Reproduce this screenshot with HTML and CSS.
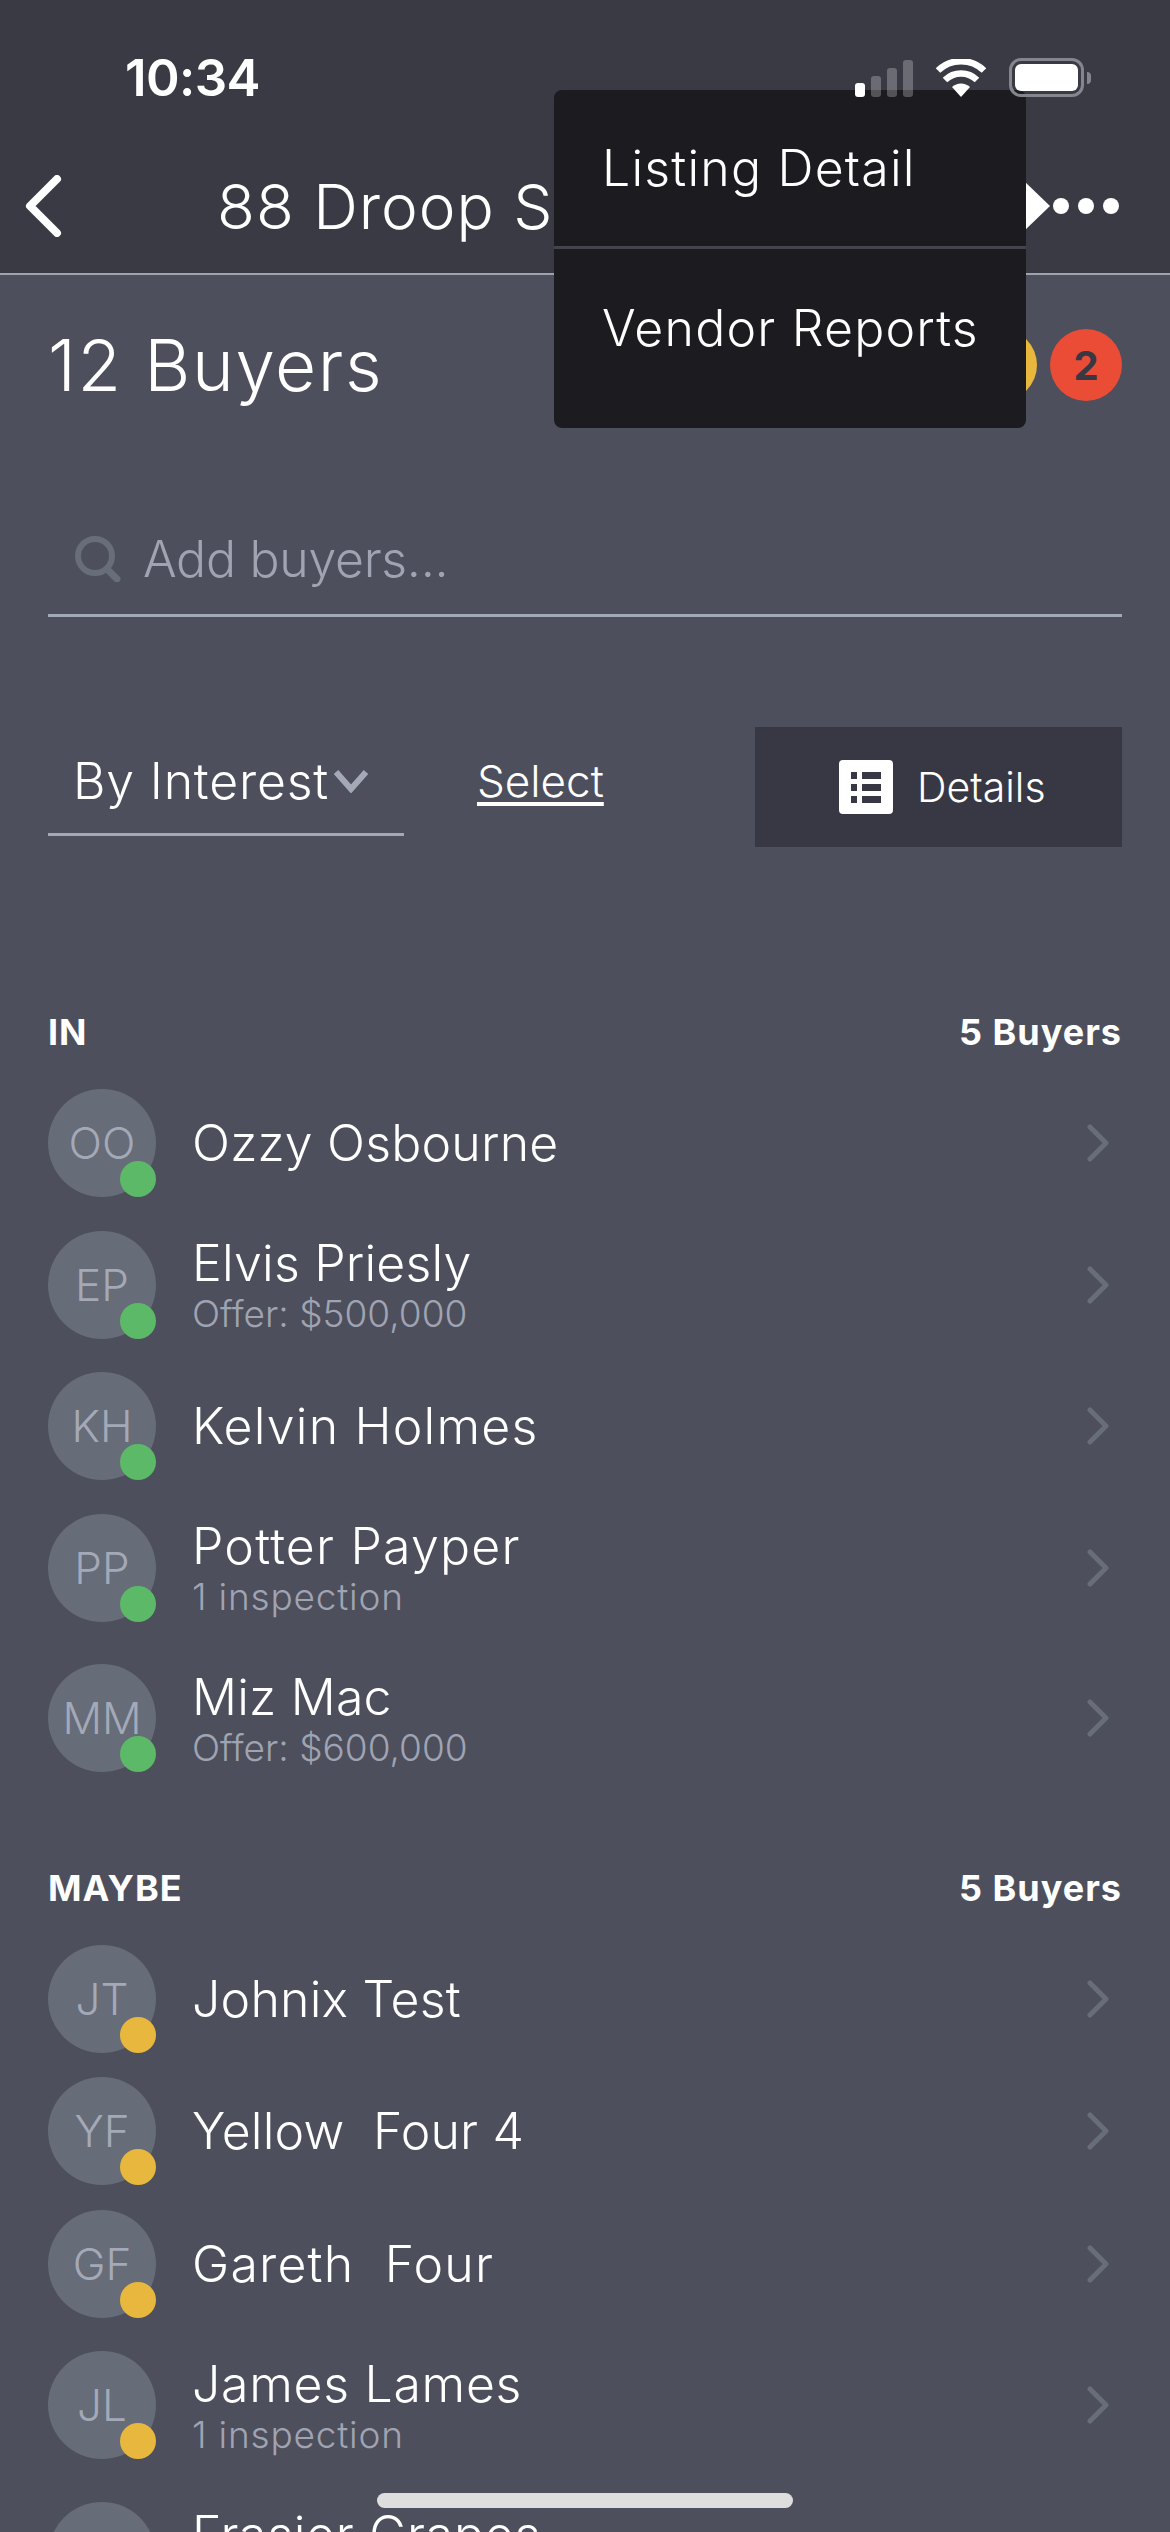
FILE: index.html
```html
<!DOCTYPE html>
<html lang="en">
<head>
    <meta charset="UTF-8">
    <meta name="viewport" content="width=device-width, initial-scale=1.0">
    <title>88 Droop St - Buyers</title>
    <link rel="stylesheet" href="styles.css">
</head>
<body>
    <div id="screen">
        <header class="top-bar">
            <div class="status-bar">
                <span class="clock">10:34</span>
                <div class="status-icons">
                    <div class="signal">
                        <i class="bar bar-1 bar-on"></i>
                        <i class="bar bar-2"></i>
                        <i class="bar bar-3"></i>
                        <i class="bar bar-4"></i>
                    </div>
                    <svg class="wifi" width="52" height="38" viewBox="0 0 52 38">
                        <path d="M26 38 L17 28 A13 13 0 0 1 35 28 Z" fill="#fff"/>
                        <path d="M10 21 A23 23 0 0 1 42 21" fill="none" stroke="#fff" stroke-width="6.5"/>
                        <path d="M3 11.5 A33 33 0 0 1 49 11.5" fill="none" stroke="#fff" stroke-width="6.5"/>
                    </svg>
                    <div class="battery">
                        <div class="battery-level"></div>
                    </div>
                    <div class="battery-nub"></div>
                </div>
            </div>
            <div class="nav-bar">
                <svg class="back" width="38" height="62" viewBox="0 0 38 62">
                    <path d="M33 4 L6 31 L33 58" fill="none" stroke="#fff" stroke-width="8" stroke-linecap="round" stroke-linejoin="round"/>
                </svg>
                <span class="nav-title">88 Droop St</span>
                <div class="more">
                    <i></i><i></i><i></i>
                </div>
            </div>
        </header>

        <main class="content">
            <div class="summary">
                <h1>12 Buyers</h1>
                <div class="badges">
                    <span class="badge badge-yellow">3</span>
                    <span class="badge badge-red">2</span>
                </div>
            </div>

            <div class="search">
                <svg width="46" height="46" viewBox="0 0 46 46">
                    <circle cx="20" cy="20" r="17" fill="none" stroke="#676d79" stroke-width="6"/>
                    <path d="M32 33 L42 43" stroke="#676d79" stroke-width="7" stroke-linecap="round"/>
                </svg>
                <span class="search-text">Add buyers...</span>
            </div>

            <div class="controls">
                <div class="sort">
                    <span>By Interest</span>
                    <svg width="36" height="24" viewBox="0 0 36 24">
                        <path d="M3 3 L18 20 L33 3" fill="none" stroke="#a4a9b8" stroke-width="6"/>
                    </svg>
                </div>
                <a class="select-link">Select</a>
                <div class="details-btn">
                    <svg width="54" height="54" viewBox="0 0 54 54">
                        <rect width="54" height="54" rx="4" fill="#fff"/>
                        <rect x="12" y="12" width="6" height="7" fill="#383844"/>
                        <rect x="23" y="12" width="19" height="7" fill="#383844"/>
                        <rect x="12" y="24" width="6" height="7" fill="#383844"/>
                        <rect x="23" y="24" width="19" height="7" fill="#383844"/>
                        <rect x="12" y="36" width="6" height="7" fill="#383844"/>
                        <rect x="23" y="36" width="19" height="7" fill="#383844"/>
                    </svg>
                    <span>Details</span>
                </div>
            </div>

            <section class="group group-in">
                <div class="group-head"><span>IN</span><span>5 Buyers</span></div>

                <div class="row">
                    <div class="avatar">OO<i class="dot dot-green"></i></div>
                    <div class="row-text"><div class="name">Ozzy Osbourne</div></div>
                    <svg class="chev" width="24" height="38" viewBox="0 0 24 38"><path d="M4 3 L20 19 L4 35" fill="none" stroke="#686d7a" stroke-width="5" stroke-linecap="round" stroke-linejoin="round"/></svg>
                </div>
                <div class="row row-sub">
                    <div class="avatar">EP<i class="dot dot-green"></i></div>
                    <div class="row-text"><div class="name">Elvis Priesly</div><div class="sub">Offer: $500,000</div></div>
                    <svg class="chev" width="24" height="38" viewBox="0 0 24 38"><path d="M4 3 L20 19 L4 35" fill="none" stroke="#686d7a" stroke-width="5" stroke-linecap="round" stroke-linejoin="round"/></svg>
                </div>
                <div class="row">
                    <div class="avatar">KH<i class="dot dot-green"></i></div>
                    <div class="row-text"><div class="name name-wide">Kelvin Holmes</div></div>
                    <svg class="chev" width="24" height="38" viewBox="0 0 24 38"><path d="M4 3 L20 19 L4 35" fill="none" stroke="#686d7a" stroke-width="5" stroke-linecap="round" stroke-linejoin="round"/></svg>
                </div>
                <div class="row row-sub">
                    <div class="avatar">PP<i class="dot dot-green"></i></div>
                    <div class="row-text"><div class="name name-wide">Potter Payper</div><div class="sub sub-wide">1 inspection</div></div>
                    <svg class="chev" width="24" height="38" viewBox="0 0 24 38"><path d="M4 3 L20 19 L4 35" fill="none" stroke="#686d7a" stroke-width="5" stroke-linecap="round" stroke-linejoin="round"/></svg>
                </div>
                <div class="row row-sub">
                    <div class="avatar">MM<i class="dot dot-green"></i></div>
                    <div class="row-text"><div class="name">Miz Mac</div><div class="sub">Offer: $600,000</div></div>
                    <svg class="chev" width="24" height="38" viewBox="0 0 24 38"><path d="M4 3 L20 19 L4 35" fill="none" stroke="#686d7a" stroke-width="5" stroke-linecap="round" stroke-linejoin="round"/></svg>
                </div>
            </section>

            <section class="group group-maybe">
                <div class="group-head"><span>MAYBE</span><span>5 Buyers</span></div>

                <div class="row">
                    <div class="avatar">JT<i class="dot dot-yellow"></i></div>
                    <div class="row-text"><div class="name">Johnix Test</div></div>
                    <svg class="chev" width="24" height="38" viewBox="0 0 24 38"><path d="M4 3 L20 19 L4 35" fill="none" stroke="#686d7a" stroke-width="5" stroke-linecap="round" stroke-linejoin="round"/></svg>
                </div>
                <div class="row">
                    <div class="avatar">YF<i class="dot dot-yellow"></i></div>
                    <div class="row-text"><div class="name">Yellow&nbsp; Four 4</div></div>
                    <svg class="chev" width="24" height="38" viewBox="0 0 24 38"><path d="M4 3 L20 19 L4 35" fill="none" stroke="#686d7a" stroke-width="5" stroke-linecap="round" stroke-linejoin="round"/></svg>
                </div>
                <div class="row">
                    <div class="avatar">GF<i class="dot dot-yellow"></i></div>
                    <div class="row-text"><div class="name name-wide">Gareth&nbsp; Four</div></div>
                    <svg class="chev" width="24" height="38" viewBox="0 0 24 38"><path d="M4 3 L20 19 L4 35" fill="none" stroke="#686d7a" stroke-width="5" stroke-linecap="round" stroke-linejoin="round"/></svg>
                </div>
                <div class="row row-sub">
                    <div class="avatar">JL<i class="dot dot-yellow"></i></div>
                    <div class="row-text"><div class="name name-mid">James Lames</div><div class="sub sub-wide">1 inspection</div></div>
                    <svg class="chev" width="24" height="38" viewBox="0 0 24 38"><path d="M4 3 L20 19 L4 35" fill="none" stroke="#686d7a" stroke-width="5" stroke-linecap="round" stroke-linejoin="round"/></svg>
                </div>
                <div class="row row-sub">
                    <div class="avatar">FG<i class="dot dot-yellow"></i></div>
                    <div class="row-text"><div class="name name-mid">Frasier Grapes</div><div class="sub sub-wide">1 inspection</div></div>
                    <svg class="chev" width="24" height="38" viewBox="0 0 24 38"><path d="M4 3 L20 19 L4 35" fill="none" stroke="#686d7a" stroke-width="5" stroke-linecap="round" stroke-linejoin="round"/></svg>
                </div>
            </section>
        </main>

        <!-- popover opened from the ... button -->
        <div class="popover-arrow"></div>
        <div class="popover">
            <div class="popover-item">Listing Detail</div>
            <div class="popover-item">Vendor Reports</div>
        </div>

        <div class="home-bar"></div>
    </div>
</body>
</html>
```

FILE: styles.css
```css
* {
    box-sizing: border-box;
}

html, body {
    margin: 0;
    padding: 0;
}

body {
    font-family: Inter, "Noto Sans", sans-serif;
    font-weight: 300;
    color: #fff;
    background-color: #4d4f5c;
}

#screen {
    position: relative;
    width: 1170px;
    height: 2532px;
    overflow: hidden;
    background-color: #4d4f5c;
}

/* Top bar */
.top-bar {
    height: 275px;
    background-color: #3a3a45;
    border-bottom: 2px solid #a0a3ae;
}

/* status bar stays above the popover */
.status-bar {
    position: relative;
    z-index: 3;
    height: 156px;
    padding: 52px 79px 0 125px;
    display: flex;
    justify-content: space-between;
    align-items: flex-start;
}

.clock {
    font-size: 51px;
    line-height: 52px;
    font-weight: 600;
    letter-spacing: -0.6px;
}

.status-icons {
    display: flex;
    align-items: flex-end;
    margin-top: 6px;
}

.signal {
    display: flex;
    align-items: flex-end;
    gap: 6px;
    margin-right: 22px;
}

.bar {
    width: 10px;
    border-radius: 3px;
    background-color: rgba(255, 255, 255, 0.25);
}
.bar-1 { height: 14px; }
.bar-2 { height: 21px; }
.bar-3 { height: 29px; }
.bar-4 { height: 37px; }
.bar-on { background-color: #fff; }

.wifi {
    margin-right: 22px;
}

.battery {
    width: 75px;
    height: 39px;
    padding: 3px;
    border: 3px solid #85858e;
    border-radius: 12px;
}

.battery-level {
    width: 100%;
    height: 100%;
    background-color: #fff;
    border-radius: 6px;
}

.battery-nub {
    width: 4px;
    height: 12px;
    margin: 0 0 13px 3px;
    background-color: #85858e;
    border-radius: 0 4px 4px 0;
}

.nav-bar {
    height: 117px;
    display: flex;
    align-items: center;
    padding: 0 51px 17px 24px;
}

.nav-title {
    margin-left: 155px;
    font-size: 62px;
    letter-spacing: 1px;
    white-space: nowrap;
}

.more {
    margin-left: auto;
    display: flex;
    gap: 9px;
}

.more i {
    width: 16px;
    height: 16px;
    border-radius: 50%;
    background-color: #fff;
}

/* Main content */
.content {
    padding: 0 48px;
}

.summary {
    height: 180px;
    display: flex;
    justify-content: space-between;
    align-items: center;
}

.summary h1 {
    margin: 0;
    font-size: 71px;
    font-weight: 300;
    letter-spacing: 1.6px;
}

.badges {
    display: flex;
    gap: 13px;
}

.badge {
    width: 72px;
    height: 72px;
    border-radius: 50%;
    display: flex;
    justify-content: center;
    align-items: center;
    font-size: 40px;
    font-weight: 700;
    color: #383844;
}
.badge-yellow { background-color: #e8b83e; }
.badge-red { background-color: #ea4c36; }

.search {
    margin-top: 56px;
    height: 106px;
    padding: 0 0 8px 27px;
    display: flex;
    align-items: center;
    gap: 22px;
    border-bottom: 3px solid #a4a9b8;
}

.search-text {
    font-size: 50px;
    letter-spacing: -0.3px;
    color: #a0a4b2;
}

.controls {
    margin-top: 110px;
    height: 120px;
    display: flex;
    align-items: flex-start;
}

.sort {
    width: 356px;
    height: 109px;
    padding: 2px 0 0 25px;
    display: flex;
    align-items: center;
    gap: 4px;
    border-bottom: 3px solid #a4a9b8;
    font-size: 50px;
    letter-spacing: 0.8px;
    white-space: nowrap;
}

.select-link {
    margin: 27px 0 0 73px;
    font-size: 44px;
    text-decoration: underline;
    text-underline-offset: 5px;
}

.details-btn {
    margin-left: auto;
    width: 367px;
    height: 120px;
    padding-left: 84px;
    display: flex;
    align-items: center;
    gap: 24px;
    background-color: #383844;
    font-size: 41px;
}

/* Buyer groups */
.group-in {
    margin-top: 165px;
}

.group-maybe {
    margin-top: 74px;
}

.group-head {
    height: 40px;
    margin-bottom: 25px;
    display: flex;
    justify-content: space-between;
    align-items: center;
    font-size: 36px;
    font-weight: 700;
    letter-spacing: 1px;
}

.row {
    height: 132.5px;
    display: flex;
    align-items: center;
    gap: 36px;
}

.row-sub {
    height: 150.5px;
}

.avatar {
    position: relative;
    flex: none;
    width: 108px;
    height: 108px;
    border-radius: 50%;
    background-color: #666c78;
    color: #a4a9b8;
    font-size: 44px;
    display: flex;
    justify-content: center;
    align-items: center;
}

/* status dot sits over the avatar corner */
.dot {
    position: absolute;
    right: 0;
    bottom: 0;
    width: 36px;
    height: 36px;
    border-radius: 50%;
}
.dot-green { background-color: #5cb968; }
.dot-yellow { background-color: #e8b83e; }

.row-text {
    flex: 1;
}

.name {
    font-size: 50px;
    line-height: 58px;
    letter-spacing: 0.2px;
    white-space: nowrap;
}

.name-mid {
    letter-spacing: 0.7px;
}

.name-wide {
    letter-spacing: 1.2px;
}

.sub {
    font-size: 37px;
    line-height: 43px;
    color: #a0a4b2;
    white-space: nowrap;
}

.sub-wide {
    letter-spacing: 0.8px;
}

.chev {
    flex: none;
    margin-right: 12px;
}

/* Popover */
.popover {
    position: absolute;
    z-index: 2;
    left: 554px;
    top: 90px;
    width: 472px;
    height: 338px;
    background-color: #1b1b20;
    border-radius: 8px;
}

.popover-item {
    height: 159px;
    padding: 0 0 0 48px;
    display: flex;
    align-items: center;
    font-size: 50px;
    letter-spacing: 1.2px;
    border-bottom: 3px solid #44444f;
}

.popover-item:last-child {
    border-bottom: none;
    padding-bottom: 2px;
}

.popover-arrow {
    position: absolute;
    z-index: 1;
    left: 1023px;
    top: 180px;
    width: 0;
    height: 0;
    border-top: 26.5px solid transparent;
    border-bottom: 26.5px solid transparent;
    border-left: 27px solid #fff;
}

.home-bar {
    position: absolute;
    z-index: 3;
    left: 377px;
    top: 2493px;
    width: 416px;
    height: 15px;
    border-radius: 8px;
    background-color: #dedede;
}
```
